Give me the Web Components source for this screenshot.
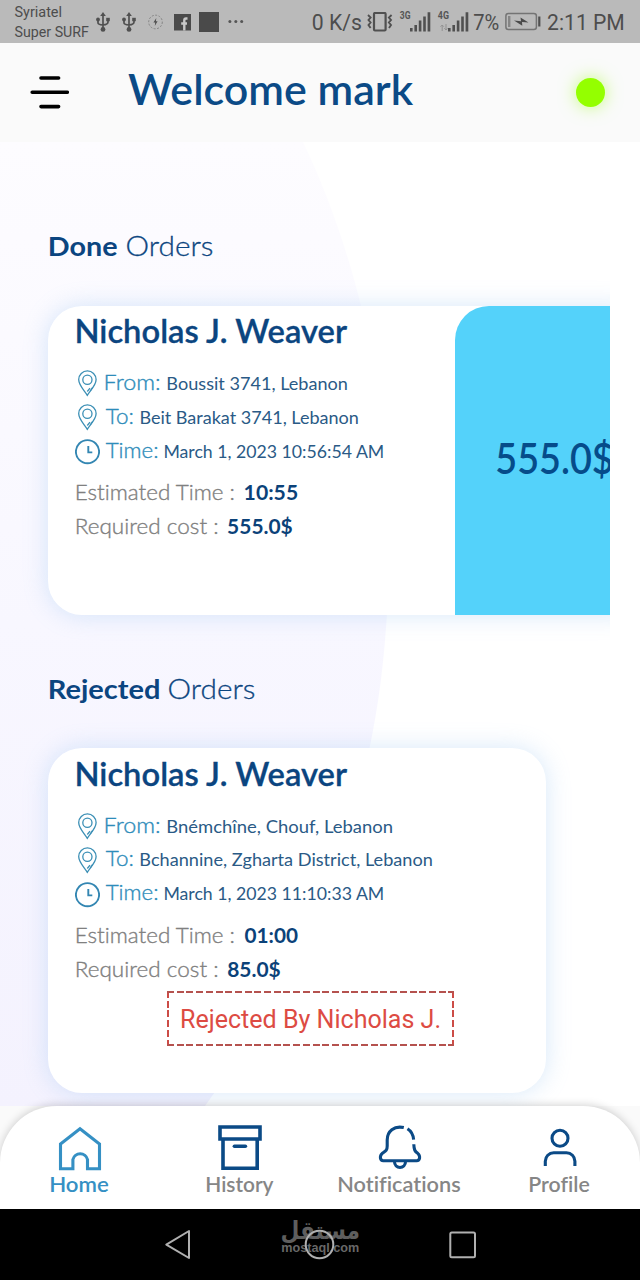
<!DOCTYPE html>
<html lang="en">
<head>
<meta charset="utf-8">
<title>Orders</title>
<style>
html,body{margin:0;padding:0;background:#fff}
body{width:640px;height:1280px;overflow:hidden;font-family:Lato,"Noto Sans",sans-serif;color:#0b4580;font-variant-ligatures:no-common-ligatures}
</style>
</head>
<body>
<phone-screen></phone-screen>
<script>
function define(name, html, init){
  customElements.define(name, class extends HTMLElement{
    connectedCallback(){
      if(this.shadowRoot) return;
      const t=document.createElement('template');
      t.innerHTML=typeof html==='function'?html(this):html;
      this.attachShadow({mode:'open'}).append(t.content.cloneNode(true));
      if(init) init(this);
    }
  });
}
const ctx=document.createElement('canvas').getContext('2d');

/* Stretches its text so that the visible glyphs span exactly w pixels. */
define('fit-text', `<style>
:host{display:inline-block;white-space:nowrap;flex:none}
span{display:inline-block;transform-origin:0 50%}
</style><span><slot></slot></span>`, el=>{
  const w=+el.getAttribute('w'), cs=getComputedStyle(el);
  /* measured at ten times the size, since the ink box is rounded to whole pixels */
  ctx.font=`${cs.fontWeight} ${parseFloat(cs.fontSize)*10}px ${cs.fontFamily}`;
  ctx.letterSpacing=el.lang==='ar'?'0px':'0.001px';
  const m=ctx.measureText(el.textContent.trim());
  const left=m.actualBoundingBoxLeft/10, k=(w-.5)/(left+m.actualBoundingBoxRight/10);
  el.style.width=w+'px';
  el.shadowRoot.querySelector('span').style.transform=`translateX(${left*k+1}px) scaleX(${k})`;
});

const usb='<svg width="14" height="20" viewBox="0 0 14 20" fill="none" stroke="#505050" stroke-width="1.7"><path d="M7 3V17M2 7V11Q2 12.5 7 13Q12 12.5 12 10V7"/><path d="M7 0L9.8 4H4.2Z" fill="#505050" stroke="none"/><circle cx="7" cy="17.4" r="2.4" fill="#505050" stroke="none"/><circle cx="2" cy="7.5" r="1.9" fill="#505050" stroke="none"/><path d="M10.2 5.8h3.6v3.4h-3.6z" fill="#505050" stroke="none"/></svg>';
const bars='<svg width="21" height="20" viewBox="0 0 21 20" fill="#505050"><path d="M0 16h2.6v3.6H0zM4.4 13h2.6v6.6H4.4zM8.8 8.5h2.6v11.1H8.8zM13.2 4.5h2.6v15.1h-2.6zM17.6.3h2.7v19.3h-2.7z"/></svg>';
define('status-bar', `<style>
:host{display:flex;height:42.5px;background:#bababa;color:#4d4d4d;font-family:Roboto,sans-serif;font-size:21.5px;line-height:45px;box-sizing:border-box;padding-left:14px}
.car{width:82px;font-size:14.5px;line-height:19.5px;padding-top:3px;display:flex;flex-direction:column}
svg{display:block;flex:none;margin-top:12px}
.net{font-size:10.5px;font-weight:700;line-height:12px;padding-top:10px;color:#555}
.net svg{margin:2px 0 0 3px}
</style>
<div class="car"><fit-text w="46.5">Syriatel</fit-text><fit-text w="74">Super SURF</fit-text></div>
${usb}
<span style="width:12px"></span>${usb}
<svg style="margin-left:11px" width="17" height="20" viewBox="0 0 17 20"><circle cx="8.5" cy="10" r="6.8" fill="none" stroke="#858585" stroke-width="1" stroke-dasharray="2 1.5"/><path d="M9.3 6L6.4 10.6H8.2L7.8 14L10.6 9.3H8.9Z" fill="#505050"/></svg>
<svg style="margin-left:10px" width="17" height="20" viewBox="0 0 17 20"><rect y="2" width="17" height="16.5" fill="#4a4a4a"/><path d="M13.5 6.5H12Q10.3 6.5 10.3 8.2V18.5M7.2 11.5H13" fill="none" stroke="#c8c8c8" stroke-width="2.4"/></svg>
<svg style="margin-left:8px" width="20" height="20"><rect width="20" height="20" fill="#4a4a4a"/></svg>
<svg style="margin-left:9px" width="16" height="20" fill="#555"><circle cx="1.9" cy="9.6" r="1.5"/><circle cx="7.8" cy="9.6" r="1.5"/><circle cx="13.7" cy="9.6" r="1.5"/></svg>
<fit-text w="48.5" style="margin-left:67.5px">0 K/s</fit-text>
<svg style="margin-left:6.5px" width="26" height="20" viewBox="0 0 26 20" fill="none" stroke="#505050" stroke-width="1.9"><rect x="7" y="1" width="11.6" height="17.5" rx="1" stroke-width="2.2"/><path d="M1 3L3.6 5.5L1.5 8L3.6 10.5L1.5 13L3.6 16M24.6 3L21.9 5.5L24 8L21.9 10.5L24 13L22 16"/></svg>
<div class="net" style="margin-left:6px"><fit-text w="10.5">3G</fit-text></div>
<span style="width:.5px"></span>${bars}
<div class="net" style="margin-left:6px;width:11px"><fit-text w="11">4G</fit-text><svg width="8" height="7" viewBox="0 0 8 7" fill="none" stroke="#929292" stroke-width="1"><path d="M2.2 7V1M.5 2.7L2.2 1L3.8 2.7M6 0V6M4.3 4.3L6 6L7.6 4.3"/></svg></div>
<span style="width:.5px"></span>${bars}
<fit-text w="25" style="margin-left:3.5px">7%</fit-text>
<svg style="margin-left:7px" width="37" height="20" viewBox="0 0 37 20"><rect x=".9" y="1.4" width="30.5" height="16" rx="2.5" fill="none" stroke="#747474" stroke-width="1.5"/><path d="M3 4h2.4v11H3z" fill="#858585"/><path d="M33.2 4.5h2.2v10h-2.2z" fill="#505050"/><path d="M9 8.5L16 9.3L15.5 5.5L23.5 10.5L17 10L17.3 13.8Z" fill="#4a4a4a"/></svg>
<fit-text w="75.5" style="margin-left:5.5px">2:11 PM</fit-text>`);

define('app-header', `<style>
:host{display:flex;height:99px;background:#fafafa;align-items:center;box-sizing:border-box;padding:0 0 0 30px}
.menu{width:39px;flex:none}
fit-text{margin:-7px 0 0 58px;font-size:43px;font-weight:600;line-height:52px;color:#0b4a86}
i{display:block;width:29px;height:29px;border-radius:50%;background:#94ff00;box-shadow:0 0 17px rgba(148,255,0,.5);margin-left:162.5px}
</style>
<svg class="menu" width="39" height="36" viewBox="0 0 39 36" stroke="#000" stroke-width="3.6" stroke-linecap="round"><path d="M11 4H28.6M2.2 18.2H37.3M11 32.6H28.6"/></svg>
<fit-text w="286">Welcome mark</fit-text><i></i>`);

define('section-title', `<style>
:host{display:flex;gap:9px;font-size:27.5px;line-height:32px;height:32px;padding-left:49px;color:#0b4580;font-weight:300;-webkit-text-stroke:.3px}
b{font-weight:700;-webkit-text-stroke:0}
</style><b><slot name="strong"></slot></b><slot></slot>`);

const pin='<svg width="25" height="27" viewBox="0 0 25 27" fill="none" stroke="#3b8fb5" stroke-width="1.3"><path d="M12.3 25.3C9.5 20.5 3.7 15.5 3.7 9.6A8.7 8.7 0 0 1 21.1 9.6C21.1 15.5 15.2 20.5 12.3 25.3Z"/><circle cx="12.4" cy="9.8" r="4.6"/><path d="M12.3 21.5L15 18.2M15.2 21L17.5 17.5"/></svg>';
const clock='<svg width="25" height="27" viewBox="0 0 25 27" fill="none" stroke="#3386b2" stroke-width="1.9"><circle cx="12.5" cy="13.7" r="11.6"/><path d="M13.3 8V14.4H17.3"/></svg>';
define('info-row', el=>`<style>
:host{display:flex;height:33.75px;line-height:34px;align-items:baseline}
svg{flex:none;align-self:center;margin:4px 5.5px 0 -.5px}
.l{font-size:21.5px;font-weight:300;color:#2e8cba;-webkit-text-stroke:.35px}
.v{font-size:17.8px;color:#2a5a86}
</style>${el.getAttribute('icon')==='clock'?clock:pin}
<fit-text class="l" w="${el.getAttribute('lw')}">${el.getAttribute('label')}</fit-text>
<fit-text class="v" style="margin-left:${el.getAttribute('gap')}px" w="${el.getAttribute('vw')}">${el.textContent}</fit-text>`);

define('stat-row', el=>`<style>
:host{display:flex;height:33.7px;line-height:34px;gap:11px;font-size:21px;padding-left:.5px;align-items:baseline}
.l{color:#808080;font-weight:300;-webkit-text-stroke:.35px}.v{font-weight:700;font-size:21.5px;color:#0b4279}
</style><fit-text class="l" w="${el.getAttribute('lw')}">${el.getAttribute('label')}</fit-text><fit-text class="v" w="${el.getAttribute('vw')}">${el.textContent}</fit-text>`);

define('order-card', `<style>
:host{display:flex;background:#fff;border-radius:34px;box-shadow:0 0 24px rgba(130,185,235,.32);overflow:visible;box-sizing:border-box}
.body{flex:1;padding:calc(4px + var(--nudge,0px)) 0 0 27px;min-width:0}
.name{font-size:33px;font-weight:600;line-height:40px;height:40px;color:#0b4580;margin:0 0 15px 1px;-webkit-text-stroke:.3px}
.stats{padding-top:9px}
</style><div class="body"><div class="name"><slot name="name"></slot></div><slot></slot><div class="stats"><slot name="stats"></slot></div><slot name="note"></slot></div><slot name="side"></slot>`);

define('price-panel', `<style>
:host{display:flex;width:196px;flex:none;background:#54d2fa;border-radius:34px 34px 0 0;align-items:center;padding-left:40.5px;box-sizing:border-box;font-size:42.5px;font-weight:600;line-height:50px;color:#064c8a}
div{margin-top:-5px}
</style><div><slot></slot></div>`);

define('reject-note', `<style>
:host{display:flex;width:286.5px;height:55px;margin:5.5px 0 0 92px;align-items:center;justify-content:center;font:25px/30px Roboto,sans-serif;color:#dd4b43;background:
repeating-linear-gradient(90deg,#b5524e 0 7px,transparent 7px 9.7px) 0 0/100% 2px no-repeat,
repeating-linear-gradient(90deg,#b5524e 0 7px,transparent 7px 9.7px) 0 100%/100% 2px no-repeat,
repeating-linear-gradient(#cc4c46 0 7px,transparent 7px 9.7px) 0 0/2px 100% no-repeat,
repeating-linear-gradient(#cc4c46 0 7px,transparent 7px 9.7px) 100% 0/2px 100% no-repeat}
::slotted(*){margin:2.5px 1px 0 0}
</style><slot></slot>`);

define('orders-view', `<style>
:host{display:block;position:relative;height:964px;overflow:hidden}
.bg{position:absolute;left:0;top:0;z-index:-1}
section{display:block}
.list{overflow:hidden;width:610px;box-sizing:border-box;padding:30px 0 30px 48px}
section-title{position:relative}
.one{padding-top:88.5px}.one .list{margin-top:14px;height:369px}
.two{padding-top:28px}.two .list{margin-top:13px;height:405px}
.one order-card{width:603px;height:309px}
.two order-card{width:498px;height:345px;--nudge:.7px}
</style>
<svg class="bg" width="640" height="964" viewBox="0 142 640 964"><defs><linearGradient id="g" x1="0" y1="0" x2="0" y2="1"><stop offset="0" stop-color="#fdfcff"/><stop offset=".5" stop-color="#f8f7ff"/><stop offset="1" stop-color="#f4f2fe"/></linearGradient></defs><path fill="url(#g)" d="M0 142H303C350 240 389 380 389 530C389 680 375 870 205 1106H0Z"/></svg>
<section class="one">
<section-title><fit-text slot="strong" w="67.5">Done</fit-text><fit-text w="86">Orders</fit-text></section-title>
<div class="list"><order-card>
<fit-text slot="name" w="272">Nicholas J. Weaver</fit-text>
<info-row icon="pin" label="From:" lw="53.5" gap="8.7" vw="179.5">Boussit 3741, Lebanon</info-row>
<info-row icon="pin" label="To:" lw="26.7" gap="8.5" vw="217.5">Beit Barakat 3741, Lebanon</info-row>
<info-row icon="clock" label="Time:" lw="51.5" gap="7" vw="219">March 1, 2023 10:56:54 AM</info-row>
<stat-row slot="stats" label="Estimated Time :" lw="157.5" vw="52.5">10:55</stat-row>
<stat-row slot="stats" label="Required cost :" lw="140.5" vw="64.5">555.0$</stat-row>
<price-panel slot="side"><fit-text w="116">555.0$</fit-text></price-panel>
</order-card></div>
</section>
<section class="two">
<section-title><fit-text slot="strong" w="109.5">Rejected</fit-text><fit-text w="86">Orders</fit-text></section-title>
<div class="list"><order-card>
<fit-text slot="name" w="272">Nicholas J. Weaver</fit-text>
<info-row icon="pin" label="From:" lw="53.5" gap="8.7" vw="224.5">Bnémchîne, Chouf, Lebanon</info-row>
<info-row icon="pin" label="To:" lw="26.7" gap="8.5" vw="291.5">Bchannine, Zgharta District, Lebanon</info-row>
<info-row icon="clock" label="Time:" lw="51.5" gap="7" vw="219">March 1, 2023 11:10:33 AM</info-row>
<stat-row slot="stats" label="Estimated Time :" lw="157.5" vw="53">01:00</stat-row>
<stat-row slot="stats" label="Required cost :" lw="140.5" vw="52.5">85.0$</stat-row>
<reject-note slot="note"><fit-text w="257.5">Rejected By Nicholas J.</fit-text></reject-note>
</order-card></div>
</section>`);

define('nav-item', `<style>
:host{display:flex;flex-direction:column;align-items:center;width:160px;color:#868686;font-size:20.5px;font-weight:600;line-height:26px}
svg{display:block;width:48px;height:48px;margin:18.5px 0 -1.5px}
::slotted(*){margin-right:2px}
:host([active]){color:#3590c4}
</style><svg viewBox="0 0 48 48" fill="none" stroke="#0b4a86" stroke-width="3.1"></svg><slot></slot>`, el=>{
  const shapes={
    home:'<path stroke="#3590c4" d="M24 4.7L43.5 20V44.8H31.5V35.5A7.5 7.5 0 0 0 16.9 35.5V44.8H4.5V20Z"/>',
    box:'<g stroke-width="3.6"><path d="M4 3H44V15H4ZM7 15V44.2H41.2V15"/><path d="M18.4 22.2H29.4" stroke-linecap="round"/></g>',
    bell:'<path d="M27.8 3.6C18 1.5 11.2 7.5 11.2 16V22C11.2 26.5 9.5 27 6.3 29.3C3.3 32 4 36.7 7.3 36.7H40.7C44 36.7 44.7 32 41.7 29.3C39 27.5 38 26 37.8 20.3M31.5 4.8C35 7 37.2 10.7 37.6 15.6M18.4 37C18.4 45.6 29.6 45.6 29.6 37"/>',
    user:'<circle cx="24" cy="14.3" r="8"/><path d="M9.3 42V37.2A8.4 8.4 0 0 1 17.7 28.8H30.5A8.4 8.4 0 0 1 38.9 37.2V42"/>'};
  el.shadowRoot.querySelector('svg').innerHTML=shapes[el.getAttribute('icon')];
});
define('bottom-nav', `<style>
:host{display:block;height:103.5px;background:#fafafa;position:relative}
div{display:flex;height:100%;background:#fff;border-radius:57px 57px 0 0;box-shadow:0 -1px 8px rgba(0,0,0,.18)}
</style><div><nav-item icon="home" active><fit-text w="57.5">Home</fit-text></nav-item><nav-item icon="box"><fit-text w="67">History</fit-text></nav-item><nav-item icon="bell"><fit-text w="121.5">Notifications</fit-text></nav-item><nav-item icon="user"><fit-text w="59.5">Profile</fit-text></nav-item></div>`);

define('system-nav', `<style>
:host{display:flex;position:relative;height:71px;background:#000;align-items:center;justify-content:space-between;padding:0 163.5px 0 164px;box-sizing:border-box}
svg{display:block}
.wm{position:absolute;left:280.5px;top:8px;width:78px;color:#5e5e5e;font-family:"DejaVu Sans",sans-serif;font-weight:700;font-size:25px;line-height:28px}
.wm .en{position:absolute;left:0;top:24px;font:700 12px/14px "Liberation Sans",sans-serif;line-height:14px;color:#686868}
svg.c{position:relative}
</style>
<div class="wm"><fit-text w="77" lang="ar">مستقل</fit-text><fit-text class="en" w="77">mostaql.com</fit-text></div>
<svg width="27" height="31" viewBox="0 0 27 31" fill="none" stroke="#b0b0b0" stroke-width="2" stroke-linejoin="round"><path d="M25 2V29L2.3 15.6Z"/></svg>
<svg class="c" width="31" height="31" fill="none" stroke="#b0b0b0" stroke-width="2"><circle cx="15.5" cy="15.5" r="13.8"/></svg>
<svg width="28" height="28" fill="none" stroke="#b0b0b0" stroke-width="2"><rect x="1.3" y="1.5" width="24.7" height="24.7" rx="1.5"/></svg>`);

define('phone-screen', `<style>
:host{display:flex;flex-direction:column;width:640px;height:1280px;isolation:isolate;overflow:hidden}
</style><status-bar></status-bar><app-header></app-header><orders-view></orders-view><bottom-nav></bottom-nav><system-nav></system-nav>`);
</script>
</body>
</html>
